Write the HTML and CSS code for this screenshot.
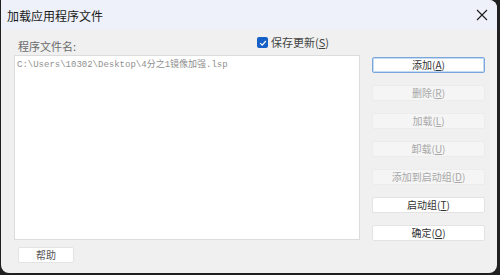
FILE: index.html
```html
<!DOCTYPE html>
<html lang="zh-CN">
<head>
    <meta charset="UTF-8">
    <title>加载应用程序文件</title>
    <link rel="stylesheet" href="styles.css">
</head>
<body>
    <div class="dialog">
        <div class="title-bar">
            <span class="title">加载应用程序文件</span>
            <svg class="close" width="12" height="12" viewBox="0 0 12 12">
                <path d="M1 1 L11 11 M11 1 L1 11" stroke="#1a1a1a" stroke-width="1.1" fill="none"/>
            </svg>
        </div>

        <div class="content">
            <div class="left-panel">
                <div class="list-header">
                    <span class="list-label">程序文件名:</span>
                    <label class="check">
                        <span class="check-box">
                            <svg width="10" height="10" viewBox="0 0 10 10">
                                <path d="M2.2 5.2 L4.2 7.2 L7.9 3" stroke="#fff" stroke-width="1.2" fill="none"/>
                            </svg>
                        </span>
                        <span>保存更新(<u>S</u>)</span>
                    </label>
                </div>
                <div class="file-list">
                    <div class="file-item">C:\Users\10302\Desktop\4<span class="cjk">分之</span>1<span class="cjk">镜像加强</span>.lsp</div>
                </div>
            </div>

            <div class="buttons">
                <button class="btn default">添加(<u>A</u>)</button>
                <button class="btn" disabled>删除(<u>R</u>)</button>
                <button class="btn" disabled>加载(<u>L</u>)</button>
                <button class="btn" disabled>卸载(<u>U</u>)</button>
                <button class="btn" disabled>添加到启动组(<u>D</u>)</button>
                <button class="btn">启动组(<u>T</u>)</button>
                <button class="btn">确定(<u>O</u>)</button>
            </div>
        </div>

        <div class="footer">
            <button class="btn help-btn">帮助</button>
        </div>
    </div>
</body>
</html>
```

FILE: styles.css
```css
* {
    margin: 0;
    padding: 0;
    box-sizing: border-box;
}

body {
    background: #202020;
    width: 500px;
    height: 275px;
    overflow: hidden;
    font-family: "Noto Sans CJK SC", "Noto Sans", sans-serif;
}

.dialog {
    margin-left: 1px;
    width: 496px;
    height: 273px;
    background: #f0f0f0;
    border-radius: 0 8px 8px 8px;
    overflow: hidden;
    display: flex;
    flex-direction: column;
}

/* Title bar */
.title-bar {
    height: 30px;
    flex-shrink: 0;
    background: #eef1f9;
    display: flex;
    align-items: center;
    justify-content: space-between;
    padding: 0 9px 0 6px;
}

.title {
    font-size: 12px;
    color: #1a1a1a;
}

/* Main area */
.content {
    display: flex;
    align-items: flex-start;
    height: 210px;
    flex-shrink: 0;
    padding-left: 13px;
    gap: 12px;
}

.left-panel {
    width: 346px;
}

.list-header {
    height: 25px;
    display: flex;
    align-items: flex-end;
    justify-content: space-between;
    padding: 0 0 2px 4px;
}

.list-label {
    font-size: 11px;
    color: #6b6b6b;
    line-height: 14px;
}

.check {
    display: flex;
    align-items: center;
    gap: 3px;
    font-size: 11px;
    color: #444;
    margin-right: 31px;
    margin-bottom: 4px;
    line-height: 13px;
}

.check-box {
    width: 11px;
    height: 11px;
    border-radius: 2px;
    background: #1661c7;
    display: flex;
    align-items: center;
    justify-content: center;
}

.file-list {
    height: 185px;
    background: #fff;
    border: 1px solid #dcdcdc;
    padding: 2px 2px;
}

.file-item {
    font-family: "Liberation Mono", monospace;
    font-size: 9px;
    color: #909090;
    line-height: 12px;
}

.cjk {
    font-family: "Noto Sans CJK SC", sans-serif;
}

/* Right buttons */
.buttons {
    width: 113px;
    padding-top: 27px;
    display: flex;
    flex-direction: column;
    gap: 12px;
}

.btn {
    height: 16px;
    width: 100%;
    flex-shrink: 0;
    background: #fff;
    border: 1px solid #e3e3e3;
    border-radius: 2px;
    font-family: "Noto Sans CJK SC", sans-serif;
    font-size: 10px;
    color: #333;
    line-height: 14px;
}

.btn u {
    text-underline-offset: 1px;
}

.btn.default {
    border: 1px solid #7aa6dc;
    box-shadow: inset 0 0 0 1px #c5daf3;
}

.btn:disabled {
    background: #f5f5f5;
    border-color: #ececec;
    color: #a8a8a8;
}

/* Footer */
.footer {
    display: flex;
    padding: 7px 0 0 17px;
}

.help-btn {
    width: 56px;
    color: #555;
}
```
